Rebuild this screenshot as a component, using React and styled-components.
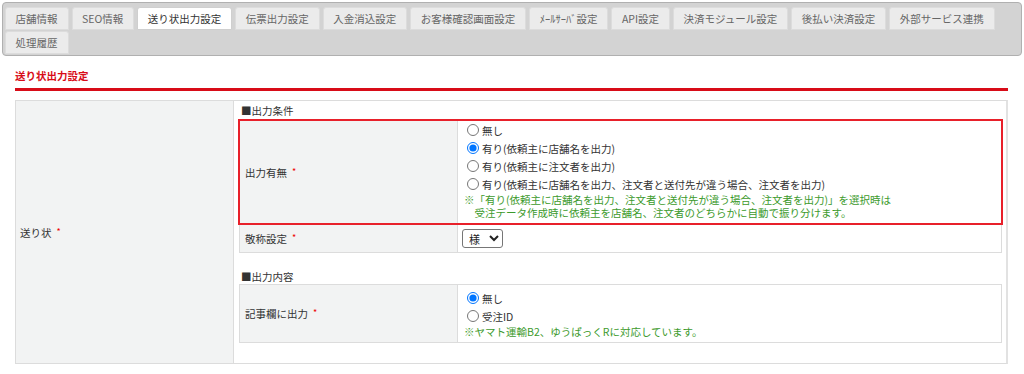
import React from "react";
import styled, { createGlobalStyle } from "styled-components";

const tabs = [
  "店舗情報",
  "SEO情報",
  "送り状出力設定",
  "伝票出力設定",
  "入金消込設定",
  "お客様確認画面設定",
  "ﾒｰﾙｻｰﾊﾞ設定",
  "API設定",
  "決済モジュール設定",
  "後払い決済設定",
  "外部サービス連携",
  "処理履歴",
];

const GlobalStyle = createGlobalStyle`
  body {
    margin: 0;
    background: #fff;
    color: #333;
    font-family: "Noto Sans CJK JP", "Noto Sans", sans-serif;
    font-size: 10.5px;
  }
`;

function App() {
  return (
    <>
      <GlobalStyle />
      <TabPanel>
        {tabs.map((t) => (
          <Tab key={t} $active={t === "送り状出力設定"}>
            {t}
          </Tab>
        ))}
      </TabPanel>
      <Content>
        <Heading>送り状出力設定</Heading>
        <OuterTable>
          <OuterLabel>
            送り状<Req>*</Req>
          </OuterLabel>
          <OuterValue>
            <SectionTitle>■出力条件</SectionTitle>
            <Highlight>
              <Row $bare>
                <RowLabel>
                  出力有無<Req>*</Req>
                </RowLabel>
                <RowValue $top={0}>
                  <Choice>
                    <input type="radio" name="out" />
                    無し
                  </Choice>
                  <Choice>
                    <input type="radio" name="out" defaultChecked />
                    有り(依頼主に店舗名を出力)
                  </Choice>
                  <Choice>
                    <input type="radio" name="out" />
                    有り(依頼主に注文者を出力)
                  </Choice>
                  <Choice>
                    <input type="radio" name="out" />
                    有り(依頼主に店舗名を出力、注文者と送付先が違う場合、注文者を出力)
                  </Choice>
                  <Note>
                    ※「有り(依頼主に店舗名を出力、注文者と送付先が違う場合、注文者を出力)」を選択時は
                    <br />
                    {"\u3000"}受注データ作成時に依頼主を店舗名、注文者のどちらかに自動で振り分けます。
                  </Note>
                </RowValue>
              </Row>
            </Highlight>
            <Row $noTop>
              <RowLabel>
                敬称設定<Req>*</Req>
              </RowLabel>
              <RowValue>
                <Select defaultValue="様">
                  <option>様</option>
                  <option>殿</option>
                </Select>
              </RowValue>
            </Row>
            <SectionTitle $gap>■出力内容</SectionTitle>
            <Row>
              <RowLabel>
                記事欄に出力<Req>*</Req>
              </RowLabel>
              <RowValue>
                <Choice>
                  <input type="radio" name="memo" defaultChecked />
                  無し
                </Choice>
                <Choice>
                  <input type="radio" name="memo" />
                  受注ID
                </Choice>
                <Note>※ヤマト運輸B2、ゆうぱっくRに対応しています。</Note>
              </RowValue>
            </Row>
          </OuterValue>
        </OuterTable>
      </Content>
    </>
  );
}

const TabPanel = styled.div`
  margin: 2px 2px 0 2px;
  padding: 4px 2px 1px 2px;
  background: #d3d3d3;
  border: 1px solid #b0b0b0;
  border-radius: 4px;
  display: flex;
  flex-wrap: wrap;
  column-gap: 3px;
  row-gap: 1px;
`;

const Tab = styled.div`
  height: 21px;
  line-height: 21px;
  padding: 0 10px 0 9.5px;
  border: 1px solid ${(p) => (p.$active ? "#cfcfcf" : "#dcdcdc")};
  border-radius: 3px 3px 0 0;
  background: ${(p) => (p.$active ? "#fff" : "#ebebeb")};
  color: ${(p) => (p.$active ? "#333" : "#666")};
  font-size: 10.5px;
  white-space: nowrap;
`;

const Content = styled.div`
  padding: 0 16px 0 15px;
`;

const Heading = styled.div`
  margin-top: 12px;
  line-height: 15px;
  padding-bottom: 5px;
  border-bottom: 3px solid #d80c18;
  color: #d80c18;
  font-weight: bold;
`;

const OuterTable = styled.div`
  margin-top: 9px;
  display: grid;
  grid-template-columns: 218px 1fr;
  border: 1px solid #dcdcdc;
  border-right: 2px solid #e2e2e2;
`;

const OuterLabel = styled.div`
  background: #f2f3f3;
  border-right: 1px solid #dcdcdc;
  padding-left: 4px;
  display: flex;
  align-items: center;
`;

const OuterValue = styled.div`
  padding: 2px 4px 20px 5px;
`;

const SectionTitle = styled.div`
  line-height: ${(p) => (p.$gap ? "14px" : "16px")};
  margin-top: ${(p) => (p.$gap ? "17px" : "0")};
  padding-left: 2px;
`;

const Highlight = styled.div`
  margin: 0 -1px;
  border: 2px solid #e8202a;
`;

const Row = styled.div`
  display: grid;
  grid-template-columns: 218px 1fr;
  border: ${(p) => (p.$bare ? "none" : "1px solid #dcdcdc")};
  border-top: ${(p) => (p.$bare || p.$noTop ? "none" : "1px solid #dcdcdc")};
`;

const RowLabel = styled.div`
  background: #f2f3f3;
  border-right: 1px solid #dcdcdc;
  padding-left: 5px;
  display: flex;
  align-items: center;
`;

const RowValue = styled.div`
  padding: ${(p) => (p.$top ?? 4)}px 4px 4px 4px;
`;

const Choice = styled.label`
  display: flex;
  align-items: center;
  height: 18px;
  white-space: nowrap;
  input {
    width: 12px;
    height: 12px;
    margin: 0 3px 0 5px;
  }
`;

const Note = styled.div`
  color: #3c9a2c;
  line-height: 13px;
  padding-left: 2px;
`;

const Req = styled.span`
  color: #e00;
  font-size: 9px;
  margin-left: 5px;
  position: relative;
  top: -1px;
`;

const Select = styled.select`
  display: block;
  width: 41px;
  height: 19px;
  font-family: "Noto Sans CJK JP", sans-serif;
  font-size: 11px;
  border: 1px solid #767676;
  border-radius: 3px;
  background: #fff;
  color: #222;
  padding: 0 2px;
`;

export default App;
